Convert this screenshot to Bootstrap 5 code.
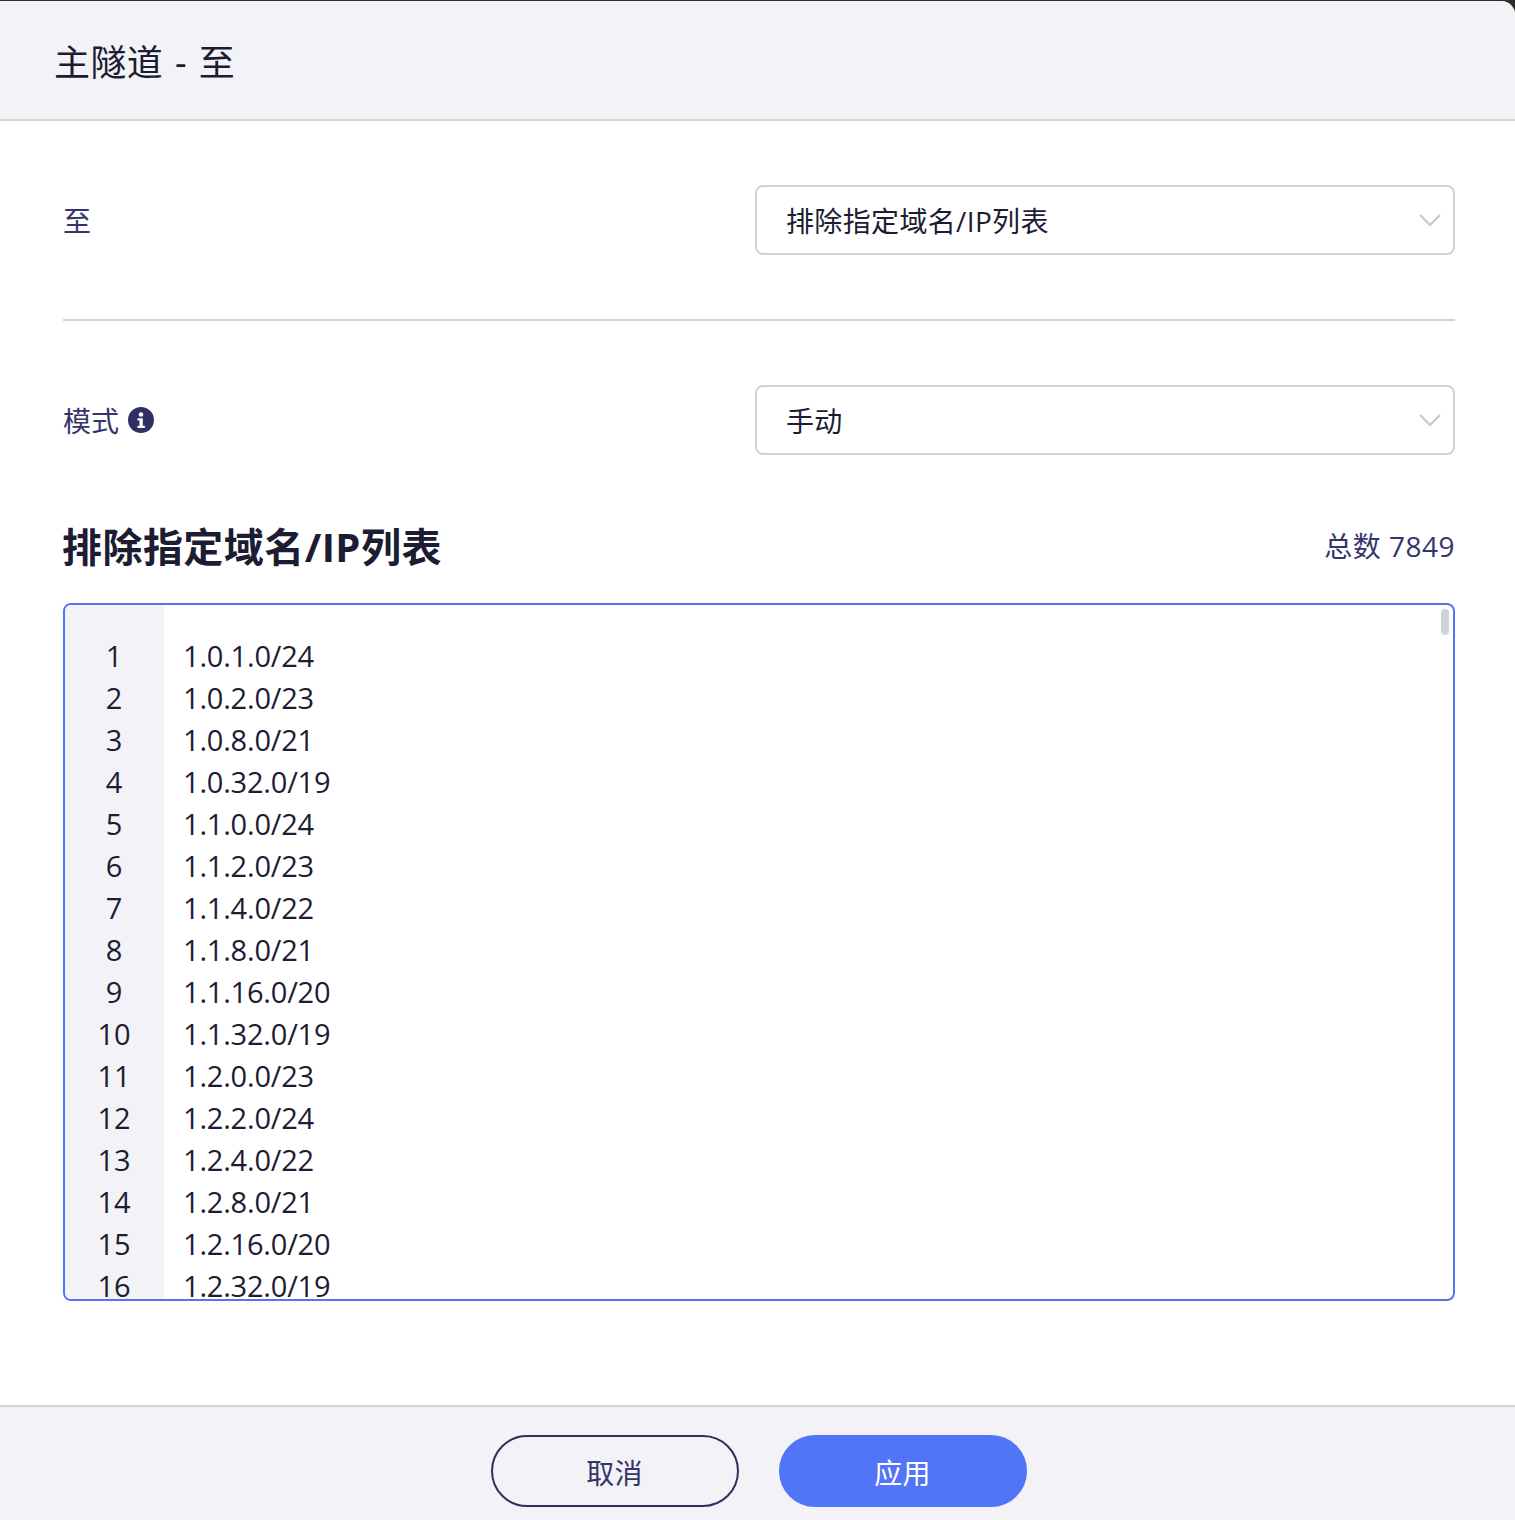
<!DOCTYPE html>
<html lang="zh">
<head>
<meta charset="utf-8">
<title>主隧道 - 至</title>
<link href="https://cdn.jsdelivr.net/npm/bootstrap@5.3.0/dist/css/bootstrap.min.css" rel="stylesheet">
<style>
html,body{height:100%;margin:0;background:#2b2b2b;}
body{font-family:"Open Sans","Noto Sans CJK SC",sans-serif;color:#35356a;overflow:hidden;}
.shell{width:1515px;height:1520px;padding-top:1px;background:#2b2b2b;}
.dialog{height:1519px;background:#fff;border-top-right-radius:14px;overflow:hidden;display:flex;flex-direction:column;}
.dlg-head{height:120px;flex:none;background:#f2f2f7;border-bottom:2px solid #d2d2d8;padding:6px 0 0 54px;display:flex;align-items:center;font-size:36px;color:#1c1c33;line-height:1;word-spacing:2px;letter-spacing:.4px;}
.dlg-body{flex:1;padding:64px 60px 0 63px;}
.field-row{height:70px;display:flex;align-items:center;justify-content:space-between;font-size:28px;}
.field-label{padding-top:2px;}
.fake-select{width:700px;height:70px;border:2px solid #d2d2d8;border-radius:8px;padding:0 12px 0 29px;display:flex;align-items:center;justify-content:space-between;color:#1c1c33;background:#fff;}
.fake-select span{padding-top:2px;letter-spacing:.35px;}
.divider{height:2px;background:#d2d2d8;margin:64px 0;}
.list-head{display:flex;align-items:center;justify-content:space-between;height:64px;margin-top:60px;margin-bottom:24px;}
.list-title{font-size:40px;font-weight:700;color:#1c1c33;margin:0 0 0 -1px;line-height:1;letter-spacing:.45px;}
.list-total{font-size:28px;letter-spacing:.5px;margin-top:-2px;}
.editor{position:relative;height:698px;border:2px solid #5274f5;border-radius:8px;overflow:hidden;display:flex;font-size:29px;line-height:42px;color:#1c1c33;letter-spacing:-.2px;}
.gutter{width:99px;flex:none;background:#f2f2f7;text-align:center;padding:30px 1px 0 0;}
.code{padding:30px 0 0 19px;}
.gutter div,.code div{height:42px;}
.thumb{position:absolute;top:4px;right:4px;width:8px;height:26px;border-radius:4px;background:#d1d3da;}
.dlg-foot{height:115px;flex:none;background:#f2f2f7;border-top:2px solid #d2d2d8;padding-top:28px;display:flex;justify-content:center;gap:40px;margin-right:-2px;}
.act{width:248px;height:72px;border-radius:36px;font-size:28px;line-height:1;padding:4px 0 0;letter-spacing:.3px;}
.act-cancel{background:transparent;border:2px solid #2f2f5f;color:#35356a;}
.act-apply{background:#5274f9;border:2px solid #5274f9;color:#fff;}
.act-apply:hover{background:#5274f9;color:#fff;}
.info-ic{margin-top:-2px;margin-left:1px;}
</style>
</head>
<body>
<div class="shell">
<div class="dialog">
  <div class="dlg-head">主隧道 - 至</div>
  <div class="dlg-body">
    <div class="field-row">
      <span class="field-label">至</span>
      <div class="fake-select"><span>排除指定域名/IP列表</span>
        <svg width="22" height="14" viewBox="0 0 22 14" fill="none" stroke="#c6c8d0" stroke-width="2"><path d="M1 2l10 10L21 2"/></svg></div>
    </div>
    <div class="divider"></div>
    <div class="field-row">
      <span class="field-label d-flex align-items-center gap-2">模式
        <svg class="info-ic" width="26" height="26" viewBox="0 0 26 26"><circle cx="13" cy="13" r="13" fill="#2f2f66"/><circle cx="13" cy="7.5" r="2.3" fill="#fff"/><path d="M9.5 11.2h5.3v7.6h2v2.2H9.5v-2.2h2v-5.4h-2z" fill="#fff"/></svg>
      </span>
      <div class="fake-select"><span>手动</span>
        <svg width="22" height="14" viewBox="0 0 22 14" fill="none" stroke="#c6c8d0" stroke-width="2"><path d="M1 2l10 10L21 2"/></svg></div>
    </div>
    <div class="list-head">
      <h2 class="list-title">排除指定域名/IP列表</h2>
      <span class="list-total">总数 7849</span>
    </div>
    <div class="editor">
      <div class="gutter"><div>1</div><div>2</div><div>3</div><div>4</div><div>5</div><div>6</div><div>7</div><div>8</div><div>9</div><div>10</div><div>11</div><div>12</div><div>13</div><div>14</div><div>15</div><div>16</div></div>
      <div class="code"><div>1.0.1.0/24</div><div>1.0.2.0/23</div><div>1.0.8.0/21</div><div>1.0.32.0/19</div><div>1.1.0.0/24</div><div>1.1.2.0/23</div><div>1.1.4.0/22</div><div>1.1.8.0/21</div><div>1.1.16.0/20</div><div>1.1.32.0/19</div><div>1.2.0.0/23</div><div>1.2.2.0/24</div><div>1.2.4.0/22</div><div>1.2.8.0/21</div><div>1.2.16.0/20</div><div>1.2.32.0/19</div></div>
      <div class="thumb"></div>
    </div>
  </div>
  <div class="dlg-foot">
    <button type="button" class="btn act act-cancel">取消</button>
    <button type="button" class="btn act act-apply">应用</button>
  </div>
</div>
</div>
<script src="https://cdn.jsdelivr.net/npm/bootstrap@5.3.0/dist/js/bootstrap.bundle.min.js"></script>
</body>
</html>
